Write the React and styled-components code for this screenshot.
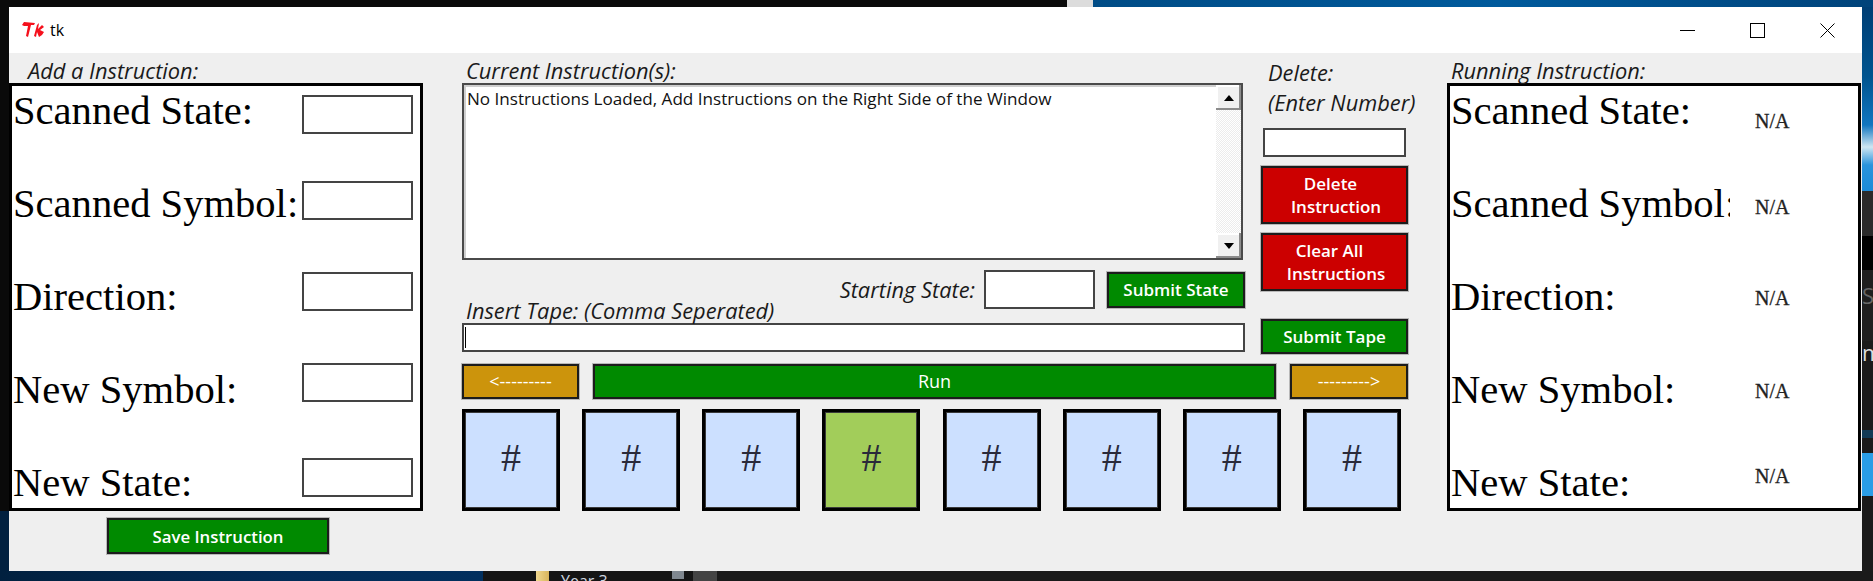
import React from "react"
import styled, { createGlobalStyle } from "styled-components"

const GlobalStyle = createGlobalStyle`
  html, body {
    margin: 0;
    padding: 0;
    background: #0a0a0a;
  }
  * {
    box-sizing: border-box;
  }
`

const uiFont = `"Open Sans", "Noto Sans", sans-serif`
const serifFont = `"Liberation Serif", "Times New Roman", serif`

const Desktop = styled.div`
  width: 1873px;
  height: 581px;
  overflow: hidden;
  display: grid;
  grid-template-columns: 9px 1853px 11px;
  grid-template-rows: 7px 564px 10px;
`

const TopStrip = styled.div`
  grid-column: 1 / 4;
  background: linear-gradient(
    90deg,
    #0a0a0a 0 1067px,
    #dcdcdc 1067px 1093px,
    #004c86 1093px,
    #005a9c 1500px,
    #00437a 1873px
  );
`

const LeftStrip = styled.div`
  background: linear-gradient(180deg, #0a0a0a 0 504px, #01203f 504px);
`

const RightStrip = styled.div`
  display: flex;
  flex-direction: column;
  overflow: hidden;
`

const StripPart = styled.div`
  height: ${(p) => p.$height}px;
  flex: none;
  background: ${(p) => p.$bg};
  color: ${(p) => p.$color || "#ddd"};
  font: 22px/1 ${uiFont};
  white-space: nowrap;
  padding-top: ${(p) => p.$pad || 0}px;
`

const BottomStrip = styled.div`
  grid-column: 1 / 4;
  display: flex;
  overflow: hidden;
  background: #1a1a1a;
`

const Wallpaper = styled.div`
  width: 483px;
  background: linear-gradient(90deg, #01203f, #012c58 60%, #012f5e);
`

const TaskbarDark = styled.div`
  width: 53px;
  background: #151515;
`

const FolderIcon = styled.div`
  width: 13px;
  background: linear-gradient(90deg, #f0d890, #d9b45c);
`

const TaskbarItem = styled.div`
  width: 144px;
  background: #151515;
  color: #cfd8e0;
  font: 16px/20px ${uiFont};
  padding-left: 12px;
  display: flex;
  justify-content: space-between;
`

const PinMark = styled.span`
  width: 12px;
  height: 8px;
  margin: 0 9px 0 0;
  background: #808890;
`

const TaskbarActive = styled.div`
  width: 24px;
  background: #444;
`

const Window = styled.div`
  display: flex;
  flex-direction: column;
  background: #efefef;
`

const TitleBar = styled.div`
  height: 46px;
  flex: none;
  background: #fff;
  display: flex;
  align-items: center;
  padding-left: 13px;
`

const TitleText = styled.span`
  margin-left: 6px;
  font: 16px ${uiFont};
  color: #000;
`

const WindowButton = styled.div`
  width: 70px;
  height: 46px;
  display: flex;
  align-items: center;
  justify-content: center;
  &:first-of-type {
    margin-left: auto;
  }
`

const Body = styled.div`
  flex: 1;
  display: flex;
  gap: 39px;
`

const SideColumn = styled.div`
  width: 414px;
  flex: none;
`

const SectionLabel = styled.div`
  font: italic 21.8px/20px ${uiFont};
  color: #1a1a1a;
  white-space: nowrap;
  padding-left: ${(p) => p.$indent || 0}px;
`

const PanelHead = styled(SectionLabel)`
  height: 30px;
  padding-top: 8px;
`

const Panel = styled.div`
  height: 428px;
  border: 3px solid #000;
  background: #fff;
  display: grid;
  grid-auto-rows: 93px;
`

const FieldRow = styled.div`
  display: grid;
  grid-template-columns: ${(p) => p.$labelWidth}px 1fr;
  align-items: start;
`

const FieldLabel = styled.div`
  font: 40.6px/46px ${serifFont};
  color: #000;
  padding: 2px 0 0 1px;
  white-space: nowrap;
  overflow: hidden;
`

const TextField = styled.div`
  width: ${(p) => p.$width}px;
  height: ${(p) => p.$height}px;
  flex: none;
  background: #fff;
  border: 2px solid #444;
`

const RowField = styled(TextField)`
  margin-top: ${(p) => p.$top}px;
`

const RunValue = styled.div`
  margin: ${(p) => p.$top + 2}px 0 0 25px;
  font: 20px/20px ${serifFont};
  color: #222;
  -webkit-text-stroke: 0.3px #222;
`

const ActionButton = styled.div`
  display: flex;
  align-items: center;
  justify-content: center;
  text-align: center;
  flex: ${(p) => (p.$grow ? "1" : "none")};
  width: ${(p) => (p.$width ? `${p.$width}px` : "auto")};
  height: ${(p) => p.$height}px;
  border: 2px solid #1c1c1c;
  box-shadow: 0 0 0 1px #b8b8b8;
  background: ${(p) => p.$bg};
  color: #fff;
  font: 600 17px/23px ${uiFont};
`

const ButtonLines = styled.div`
  display: flex;
  flex-direction: column;
  align-items: center;
`

const ButtonLine = styled.span`
  margin-right: ${(p) => p.$shift || 0}px;
  margin-left: ${(p) => (p.$shift ? 0 : 3)}px;
`

const ControlButton = styled(ActionButton)`
  font: 400 18px/23px ${uiFont};
`

const SaveButton = styled(ActionButton)`
  margin: 7px 0 0 98px;
  font-size: 16.8px;
`

const Middle = styled.div`
  width: 946px;
  flex: none;
`

const TopArea = styled.div`
  display: flex;
  gap: 16px;
`

const MainColumn = styled.div`
  width: 783px;
  flex: none;
`

const InstructionBox = styled.div`
  width: 781px;
  height: 177px;
  border: 2px solid #4a4a4a;
  display: flex;
  background: #fff;
`

const InstructionText = styled.div`
  flex: 1;
  padding: 4px 0 0 3px;
  font: 17.1px/20px ${uiFont};
  color: #111;
  box-shadow: inset 2px 2px 0 #cfcfcf;
`

const ScrollBar = styled.div`
  width: 25px;
  display: flex;
  flex-direction: column;
  background: repeating-conic-gradient(#fff 0 25%, #ececec 0 50%) 0 0 / 2px 2px;
`

const ScrollButton = styled.div`
  height: 25px;
  flex: none;
  background: #f0f0f0;
  box-shadow: inset -2px -2px 0 #8c8c8c, inset 2px 2px 0 #fff;
  display: flex;
  align-items: center;
  justify-content: center;
  &:last-child {
    margin-top: auto;
  }
`

const ScrollArrow = styled.span`
  width: 0;
  height: 0;
  border-left: 5px solid transparent;
  border-right: 5px solid transparent;
  border-bottom: ${(p) => (p.$down ? "0" : "6px solid #000")};
  border-top: ${(p) => (p.$down ? "6px solid #000" : "0")};
`

const StartRow = styled.div`
  height: 39px;
  margin-top: 10px;
  display: flex;
  align-items: center;
  justify-content: flex-end;
`

const StartLabel = styled(SectionLabel)`
  margin-right: 9px;
`

const StartButton = styled(ActionButton)`
  margin-left: 12px;
`

const TapeLabel = styled(SectionLabel)`
  margin-top: -8px;
`

const TapeField = styled(TextField)`
  margin-top: 2px;
  padding: 2px 0 2px 1px;
`

const Caret = styled.div`
  width: 1px;
  height: 100%;
  background: #000;
`

const ActionColumn = styled.div`
  width: 147px;
  flex: none;
  padding-top: 5px;
  display: flex;
  flex-direction: column;
`

const DeleteLabel = styled(SectionLabel)`
  line-height: 30px;
  padding-left: 7px;
`

const DeleteField = styled(TextField)`
  margin: 10px 0 9px 2px;
`

const SecondButton = styled(ActionButton)`
  margin-top: 9px;
`

const TapeButton = styled(ActionButton)`
  margin-top: 28px;
`

const ControlRow = styled.div`
  display: flex;
  gap: 14px;
  margin-top: 10px;
`

const TapeRow = styled.div`
  display: flex;
  justify-content: space-between;
  margin: 10px 7px 0 0;
`

const TapeCell = styled.div`
  width: 98px;
  height: 102px;
  border: 3px solid #000;
  box-shadow: inset 0 0 0 1px #3a3a3a;
  background: ${(p) => (p.$active ? "#a2cd5a" : "#cce0ff")};
  display: flex;
  align-items: center;
  justify-content: center;
  padding-bottom: 4px;
  font: 40px/1 ${serifFont};
  color: #2a2a3a;
`

const fields = [
  { name: "Scanned State:", input: 9, value: 23 },
  { name: "Scanned Symbol:", input: 2, value: 16 },
  { name: "Direction:", input: 0, value: 14 },
  { name: "New Symbol:", input: -2, value: 14 },
  { name: "New State:", input: 0, value: 6 },
]

const cells = [0, 1, 2, 3, 4, 5, 6, 7]

const TkLogo = () => (
  <svg width="22" height="16" viewBox="0 0 22 16" fill="#f5101c">
    <path d="M0 3 L2 0 L13 1 L12 3 L9 3 L6 15 L4 14 L6 4 L2 4 Z" />
    <path d="M12 14 L15 3 L17 1 L16 7 L20 3 L22 5 L18 8 L22 10 L20 13 L17 15 L15 10 L14 15 Z" />
  </svg>
)

const MinimizeIcon = () => (
  <svg width="15" height="15" viewBox="0 0 15 15" stroke="#000" fill="none">
    <path d="M0 7.5 H15" />
  </svg>
)

const MaximizeIcon = () => (
  <svg width="15" height="15" viewBox="0 0 15 15" stroke="#000" fill="none">
    <rect x="0.5" y="0.5" width="14" height="14" />
  </svg>
)

const CloseIcon = () => (
  <svg width="15" height="15" viewBox="0 0 15 15" stroke="#000" fill="none">
    <path d="M0.5 0.5 L14.5 14.5 M14.5 0.5 L0.5 14.5" />
  </svg>
)

const App = () => {
  return (
    <Desktop>
      <GlobalStyle />
      <TopStrip />
      <LeftStrip />
      <Window>
        <TitleBar>
          <TkLogo />
          <TitleText>tk</TitleText>
          <WindowButton><MinimizeIcon /></WindowButton>
          <WindowButton><MaximizeIcon /></WindowButton>
          <WindowButton><CloseIcon /></WindowButton>
        </TitleBar>
        <Body>
          <SideColumn>
            <PanelHead $indent={19}>Add a Instruction:</PanelHead>
            <Panel>
              {fields.map((field) => (
                <FieldRow key={field.name} $labelWidth={290}>
                  <FieldLabel>{field.name}</FieldLabel>
                  <RowField $width={111} $height={39} $top={field.input} />
                </FieldRow>
              ))}
            </Panel>
            <SaveButton $width={222} $height={36} $bg="#008a00">Save Instruction</SaveButton>
          </SideColumn>

          <Middle>
            <TopArea>
              <MainColumn>
                <PanelHead $indent={4}>Current Instruction(s):</PanelHead>
                <InstructionBox>
                  <InstructionText>
                    No Instructions Loaded, Add Instructions on the Right Side of the Window
                  </InstructionText>
                  <ScrollBar>
                    <ScrollButton><ScrollArrow /></ScrollButton>
                    <ScrollButton><ScrollArrow $down /></ScrollButton>
                  </ScrollBar>
                </InstructionBox>
                <StartRow>
                  <StartLabel>Starting State:</StartLabel>
                  <TextField $width={111} $height={39} />
                  <StartButton $width={138} $height={36} $bg="#008a00">Submit State</StartButton>
                </StartRow>
                <TapeLabel $indent={4}>Insert Tape: (Comma Seperated)</TapeLabel>
                <TapeField $width={783} $height={29}>
                  <Caret />
                </TapeField>
              </MainColumn>

              <ActionColumn>
                <DeleteLabel>Delete:</DeleteLabel>
                <DeleteLabel>(Enter Number)</DeleteLabel>
                <DeleteField $width={143} $height={29} />
                <ActionButton $height={58} $bg="#cc0000">
                  <ButtonLines>
                    <ButtonLine $shift={8}>Delete</ButtonLine>
                    <ButtonLine>Instruction</ButtonLine>
                  </ButtonLines>
                </ActionButton>
                <SecondButton $height={58} $bg="#cc0000">
                  <ButtonLines>
                    <ButtonLine $shift={10}>Clear All</ButtonLine>
                    <ButtonLine>Instructions</ButtonLine>
                  </ButtonLines>
                </SecondButton>
                <TapeButton $height={35} $bg="#008a00">Submit Tape</TapeButton>
              </ActionColumn>
            </TopArea>

            <ControlRow>
              <ControlButton $width={117} $height={35} $bg="#cc940c">{"<---------"}</ControlButton>
              <ControlButton $grow $height={35} $bg="#008a00">Run</ControlButton>
              <ControlButton $width={118} $height={35} $bg="#cc940c">{"--------->"}</ControlButton>
            </ControlRow>

            <TapeRow>
              {cells.map((cell) => (
                <TapeCell key={cell} $active={cell === 3}>#</TapeCell>
              ))}
            </TapeRow>
          </Middle>

          <SideColumn>
            <PanelHead $indent={4}>Running Instruction:</PanelHead>
            <Panel>
              {fields.map((field) => (
                <FieldRow key={field.name} $labelWidth={280}>
                  <FieldLabel>{field.name}</FieldLabel>
                  <RunValue $top={field.value}>N/A</RunValue>
                </FieldRow>
              ))}
            </Panel>
          </SideColumn>
        </Body>
      </Window>
      <RightStrip>
        <StripPart
          $height={184}
          $bg="linear-gradient(180deg, #003f75 0, #00548f 70px, #1176c0 118px, #cfe6f2 140px, #2a94dc 158px, #1c8bd8 184px)"
        />
        <StripPart $height={45} $bg="#2b2b2b" />
        <StripPart $height={34} $bg="#000" />
        <StripPart $height={71} $bg="#1f1f1f" $color="#666" $pad={14}>S</StripPart>
        <StripPart $height={89} $bg="#1b1b1b">m</StripPart>
        <StripPart $height={8} $bg="#123a55" />
        <StripPart $height={15} $bg="#1b1b1b" />
        <StripPart $height={43} $bg="#2a9de6" />
        <StripPart $height={80} $bg="#1b1b1b" />
      </RightStrip>
      <BottomStrip>
        <Wallpaper />
        <TaskbarDark />
        <FolderIcon />
        <TaskbarItem>
          Year 3
          <PinMark />
        </TaskbarItem>
        <TaskbarActive />
      </BottomStrip>
    </Desktop>
  )
}

export default App
